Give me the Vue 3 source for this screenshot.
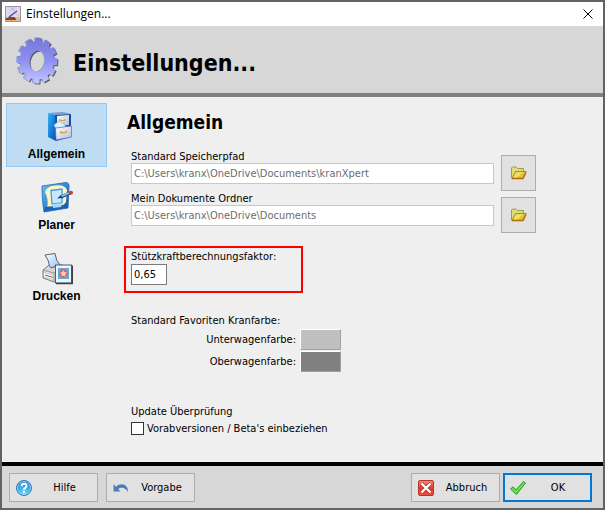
<script setup>
import { ref } from 'vue'

const sections = [
  { id: 'general', label: 'Allgemein' },
  { id: 'planner', label: 'Planer' },
  { id: 'print', label: 'Drucken' },
]
const active = ref('general')

const folders = ref([
  { id: 'storage', label: 'Standard Speicherpfad', path: 'C:\\Users\\kranx\\OneDrive\\Documents\\kranXpert' },
  { id: 'documents', label: 'Mein Dokumente Ordner', path: 'C:\\Users\\kranx\\OneDrive\\Documents' },
])
const factor = ref('0,65')
const preRelease = ref(false)

// Outline of the twelve-toothed gear in the header
function gearOutline(cx, cy, rx, ry, teeth) {
  const points = []
  for (let i = 0; i < teeth; i++) {
    const mid = ((i + 0.1) / teeth) * Math.PI * 2
    for (const [offset, scale] of [[-0.18, 0.83], [-0.15, 1], [0.15, 1], [0.18, 0.83]]) {
      const a = mid + offset
      points.push(`${(cx + Math.cos(a) * rx * scale).toFixed(1)} ${(cy + Math.sin(a) * ry * scale).toFixed(1)}`)
    }
  }
  return `M${points.join('L')}Z`
}
const hole = 'M25.500 15.200A9.200 11.200 12 0 1 21.500 37A9.200 11.200 12 0 1 25.500 15.200Z'
const gear = gearOutline(23.5, 25.5, 20, 23, 12) + hole
</script>

<template>
  <div class="desktop">
    <main class="dialog">
      <header class="titlebar">
        <svg class="app-icon" viewBox="0 0 16 16" aria-hidden="true">
          <rect x=".5" y=".5" width="15" height="15" fill="#dcd9e8" stroke="#9d91a5" />
          <path d="M1 11h14v4H1z" fill="#d9bb83" />
          <path d="M5 1l5 4M10 1L5 5" stroke="#b9b9e2" fill="none" />
          <path d="M4 11l8-6" stroke="#4147b4" stroke-width="1.4" />
          <path d="M1 12h2l1-1h5l2 1v2H1z" fill="#8d3c1c" />
          <path d="M10 12h5" stroke="#e3c08d" />
          <path d="M11 8l3 2" stroke="#f0b8a0" />
        </svg>
        <span class="titlebar-text">Einstellungen...</span>
        <button class="close" type="button" aria-label="Schließen">
          <svg viewBox="0 0 10 10"><path d="M.5.5l9 9M9.5.5l-9 9" stroke="#000" fill="none" /></svg>
        </button>
      </header>

      <div class="banner">
        <svg class="gear" viewBox="0 0 48 50" aria-hidden="true">
          <defs>
            <linearGradient id="gear-fill" x1="0" y1="0" x2="0" y2="1">
              <stop offset="0" stop-color="#7474da" />
              <stop offset=".5" stop-color="#8f8ff3" />
              <stop offset="1" stop-color="#c6c6ff" />
            </linearGradient>
          </defs>
          <path :d="gear" transform="translate(1 1.2)" fill="#5a6068" fill-rule="evenodd" />
          <path :d="gear" transform="translate(-1.4 0)" fill="#8ba3c4" fill-rule="evenodd" />
          <path :d="gear" fill="url(#gear-fill)" fill-rule="evenodd" />
        </svg>
        <h1>Einstellungen...</h1>
      </div>

      <div class="body">
        <nav class="sidebar">
          <button
            v-for="s in sections"
            :key="s.id"
            type="button"
            class="section"
            :class="{ active: active === s.id }"
            @click="active = s.id"
          >
            <svg v-if="s.id === 'general'" class="section-icon" viewBox="0 0 32 32" aria-hidden="true">
              <defs>
                <linearGradient id="cab" x1="0" y1="0" x2="1" y2="1">
                  <stop offset="0" stop-color="#35b4f8" /><stop offset="1" stop-color="#0749b5" />
                </linearGradient>
                <linearGradient id="drawer" x1="0" y1="0" x2="1" y2="1">
                  <stop offset="0" stop-color="#fff" /><stop offset="1" stop-color="#b4bed8" />
                </linearGradient>
              </defs>
              <path d="M7 2L15 4V30L7 26Z" fill="url(#cab)" />
              <path d="M7 2L21 1L30 2.5L15 4Z" fill="#7b9fc7" />
              <path d="M14 4L30 3V26L15 30Z" fill="#174ca5" />
              <path d="M16 5L28 4V14L16 15Z" fill="url(#drawer)" />
              <path d="M19 8v1.500h5V8" fill="none" stroke="#d7a640" stroke-width="1.2" />
              <path d="M13 14L18 10L23 13L25 16L15 18Z" fill="#d9f3ff" stroke="#68b4e7" stroke-width=".7" />
              <path d="M14.500 17L30.500 15V26L15 29Z" fill="url(#drawer)" stroke="#526da5" stroke-width=".7" />
              <path d="M20 20v2l5-.7V19.5" fill="none" stroke="#d99c2c" stroke-width="1.3" />
            </svg>
            <svg v-else-if="s.id === 'planner'" class="section-icon" viewBox="0 0 32 32" aria-hidden="true">
              <defs>
                <linearGradient id="board" x1="0" y1="0" x2="1" y2="1">
                  <stop offset="0" stop-color="#68c4f5" /><stop offset="1" stop-color="#0b48a3" />
                </linearGradient>
              </defs>
              <path d="M1 4L25 .5C27 .5 28 2 28 4L27 26L3 30C2 25 1 14 1 4Z" fill="url(#board)" stroke="#2166b4" stroke-width=".8" />
              <path d="M4 10Q6 4 14 3.500Q24 2.500 26 8L25 20Q22 25 14 26L6 26Q8 18 4 10Z" fill="#fff3bf" />
              <path d="M10 8.5L21 7V21L11 22Z" fill="#c7e7ff" stroke="#3c9ee8" stroke-width="1.3" />
              <path d="M4 25L21 23L26 25L3 29.500Z" fill="#1464c0" />
              <path d="M11 22L21 21L20 25L12 26Z" fill="#a8d8fa" />
              <path d="M20 15L29 11" stroke="#214f92" stroke-width="3.2" />
              <path d="M20 14.6L28 11" stroke="#8fc8f0" stroke-width="1.6" />
              <path d="M16 16.5L20 13L21.5 16Z" fill="#1f3d6c" />
              <circle cx="30" cy="10.8" r="2" fill="#c93c31" />
            </svg>
            <svg v-else class="section-icon" viewBox="0 0 32 32" aria-hidden="true">
              <defs>
                <linearGradient id="sheet" x1="0" y1="0" x2="1" y2="1">
                  <stop offset="0" stop-color="#fff" /><stop offset="1" stop-color="#8fc0fb" />
                </linearGradient>
              </defs>
              <path d="M4 2L14 .5Q15 8 19 12L9 15Q8 7 4 2Z" fill="url(#sheet)" stroke="#4b5260" stroke-width=".9" />
              <path d="M2 17L8 12L10 15L19 12H22V25L13 29L2 25Z" fill="#d6d6d6" stroke="#707070" stroke-width=".9" />
              <path d="M2 17L13 20L21 15M13 20V29" fill="none" stroke="#999" />
              <path d="M3 20L12 23V26L3 23Z" fill="#fff" />
              <path d="M4 22l8 2.5" stroke="#666" />
              <rect x="14.5" y="12" width="16" height="18" fill="#f4f4f4" stroke="#555b63" />
              <path d="M15 30.500h16.300V12.500" fill="none" stroke="#3d4248" stroke-width="1.400" />
              <rect x="17" y="15" width="11" height="11" fill="#53adf2" />
              <circle cx="22.500" cy="20.500" r="4" fill="#e8603c" />
              <path d="M22.500 17.2l1.2 2 2.3.3-1.8 1.7.3 2.4-2-1.1-2 1.1.3-2.4-1.8-1.7 2.3-.3z" fill="#ffd3c4" />
            </svg>
            <span>{{ s.label }}</span>
          </button>
        </nav>

        <section class="panel">
          <h2>Allgemein</h2>

          <div class="folders">
            <div v-for="f in folders" :key="f.id" class="folder-row">
              <div class="field">
                <label :for="f.id" class="caption">{{ f.label }}</label>
                <input :id="f.id" v-model="f.path" class="path" type="text" readonly />
              </div>
              <button class="browse" type="button" :aria-label="f.label + ' auswählen'">
                <svg viewBox="0 0 16 16" aria-hidden="true">
                  <path d="M.5 13V3L1.500 2H5L6.500 3.500H12.500V7L2 13Z" fill="#dfdc78" stroke="#a39a55" />
                  <path d="M4.500 6.500H15.200L12 13.500H1Z" fill="#dfc22f" stroke="#a18a4c" />
                  <path d="M5 7.200H12L6 12.800H2.200Z" fill="#ece365" />
                  <path d="M1 13.500H12L15 7.500" fill="none" stroke="#b06c08" stroke-width="1.300" />
                </svg>
              </button>
            </div>
          </div>

          <div class="highlight field">
            <label for="factor" class="caption">Stützkraftberechnungsfaktor:</label>
            <input id="factor" v-model="factor" class="factor" type="text" />
          </div>

          <div class="colors">
            <p class="caption">Standard Favoriten Kranfarbe:</p>
            <div class="color-rows">
              <div class="color-row">
                <label for="under">Unterwagenfarbe:</label>
                <button id="under" type="button" class="swatch light"></button>
              </div>
              <div class="color-row">
                <label for="upper">Oberwagenfarbe:</label>
                <button id="upper" type="button" class="swatch dark"></button>
              </div>
            </div>
          </div>

          <div class="updates">
            <p class="caption">Update Überprüfung</p>
            <label class="check">
              <input v-model="preRelease" type="checkbox" />
              <span class="caption">Vorabversionen / Beta's einbeziehen</span>
            </label>
          </div>
        </section>
      </div>

      <footer class="actions">
        <div class="group left">
          <button type="button" class="action">
            <svg viewBox="0 0 16 16" aria-hidden="true">
              <defs>
                <radialGradient id="help" cx=".5" cy=".8" r=".8">
                  <stop offset="0" stop-color="#6fd8ff" /><stop offset="1" stop-color="#1678c8" />
                </radialGradient>
              </defs>
              <circle cx="8" cy="8" r="7.500" fill="url(#help)" stroke="#2a7fc0" />
              <circle cx="8" cy="8" r="6.500" fill="none" stroke="#9fdcfb" stroke-width=".8" />
              <path d="M5.500 6.200C5.500 2.800 10.700 3 10.500 6C10.400 7.800 8 7.800 8 9.800" fill="none" stroke="#fff" stroke-width="1.900" />
              <circle cx="8" cy="12" r="1.200" fill="#fff" />
            </svg>
            <span>Hilfe</span>
          </button>
          <button type="button" class="action">
            <svg viewBox="0 0 16 16" aria-hidden="true">
              <path d="M.5 4V11.500H7.500L5.300 9.300C8 6.800 12.300 7.500 14.800 12C15.800 5 8.500 1.500 3 6.700Z" fill="#4c7dbb" />
            </svg>
            <span>Vorgabe</span>
          </button>
        </div>
        <div class="group right">
          <button type="button" class="action">
            <svg viewBox="0 0 16 16" aria-hidden="true">
              <defs>
                <linearGradient id="cancel" x1="0" y1="0" x2="0" y2="1">
                  <stop offset="0" stop-color="#f48a80" /><stop offset=".5" stop-color="#dd3b31" /><stop offset="1" stop-color="#f0503a" />
                </linearGradient>
              </defs>
              <rect x=".5" y=".5" width="15" height="15" rx="1.500" fill="url(#cancel)" stroke="#b8352d" />
              <path d="M3.500 3.500l9 9M12.500 3.500l-9 9" stroke="#a83028" stroke-width="3.600" />
              <path d="M3.500 3.500l9 9M12.500 3.500l-9 9" stroke="#fff" stroke-width="2.400" />
            </svg>
            <span>Abbruch</span>
          </button>
          <button type="button" class="action primary">
            <svg viewBox="0 0 16 16" aria-hidden="true">
              <path d="M.6 9L3 6.800L6 9.800L13.500 1.500L15.500 3L6.500 14.500Z" fill="#4ed13c" stroke="#239a1f" stroke-width=".9" />
              <path d="M2 8.800L6.200 12L14 3" fill="none" stroke="#96ee7d" stroke-width=".9" />
            </svg>
            <span>OK</span>
          </button>
        </div>
      </footer>
    </main>
  </div>
</template>

<style>
body {
  background: #646464;
}
</style>

<style scoped>
* {
  box-sizing: border-box;
}

.desktop {
  display: flex;
  min-height: 100vh;
  padding: 2px;
  background: #626262;
  color: #000;
  font: 11px/14px "DejaVu Sans Condensed", "DejaVu Sans", sans-serif;
}

button,
input {
  margin: 0;
  padding: 0;
  font: inherit;
  color: inherit;
  border-radius: 0;
}

svg {
  display: block;
  flex: none;
}

h1,
h2,
p {
  margin: 0;
}

.caption {
  padding-top: 2px;
  line-height: 12px;
}

.dialog {
  display: flex;
  flex: 1;
  flex-direction: column;
  min-width: 0;
  background: #efefef;
}

.titlebar {
  display: flex;
  align-items: center;
  height: 24px;
  padding: 0 10px 0 3px;
  background: #fff;
  font: 12px/16px "Open Sans", "Noto Sans", sans-serif;
}

.app-icon {
  width: 16px;
  height: 16px;
  margin-right: 5px;
}

.titlebar-text {
  flex: 1;
}

.close {
  border: 0;
  background: none;
}

.close svg {
  width: 10px;
  height: 10px;
}

.banner {
  display: flex;
  align-items: center;
  gap: 11px;
  height: 71px;
  padding-left: 12px;
  border-bottom: 4px solid #808080;
  background: #d7d7d7;
}

.gear {
  width: 48px;
  height: 50px;
}

h1 {
  padding-top: 6px;
  font-size: 23px;
  line-height: 28px;
}

h2 {
  margin-left: -4px;
  font-size: 19px;
  line-height: 28px;
}

.body {
  display: flex;
  flex: 1;
}

.sidebar {
  display: flex;
  flex: none;
  flex-direction: column;
  gap: 7px;
  width: 109px;
  padding: 6px 4px;
}

.section {
  display: flex;
  flex-direction: column;
  align-items: center;
  gap: 4px;
  height: 64px;
  padding-top: 7px;
  border: 1px solid transparent;
  background: none;
  font: bold 12px/14px "Liberation Sans", sans-serif;
}

.section.active {
  border-color: #90c8f6;
  background: #c0dcf3;
}

.section-icon {
  width: 32px;
  height: 32px;
}

.panel {
  flex: 1;
  min-width: 0;
  padding: 11px 67px 12px 20px;
}

.folders {
  margin-top: 13px;
}

.folder-row {
  display: flex;
  align-items: flex-end;
  gap: 7px;
  height: 42px;
}

.field {
  display: flex;
  flex-direction: column;
  align-items: flex-start;
}

.folder-row .field {
  flex: 1;
  height: 42px;
}

.path {
  width: 100%;
  height: 21px;
  padding: 0 2px;
  border: 1px solid #c8c8c8;
  background: #fff;
  color: #6d6d6d;
}

.browse {
  display: flex;
  align-items: center;
  justify-content: center;
  width: 35px;
  height: 36px;
  border: 1px solid #adadad;
  background: #e1e1e1;
}

.browse svg {
  width: 16px;
  height: 16px;
}

.highlight {
  gap: 1px;
  width: 179px;
  margin: 13px 0 0 -7px;
  padding: 1px 5px 6px;
  border: 2px solid #f00;
}

.factor {
  width: 36px;
  height: 21px;
  padding: 0 2px;
  border: 1px solid #7a7a7a;
  background: #fff;
}

.colors {
  width: 210px;
  margin-top: 20px;
}

.color-rows {
  display: grid;
  gap: 1px;
  margin-top: 2px;
}

.color-row {
  display: flex;
  align-items: center;
  justify-content: flex-end;
  gap: 4px;
}

.swatch {
  width: 41px;
  height: 21px;
  border: 1px solid;
  border-color: #fff #a0a0a0 #a0a0a0 #fff;
}

.light {
  background: #c0c0c0;
}

.dark {
  background: #808080;
}

.updates {
  display: flex;
  flex-direction: column;
  gap: 3px;
  margin-top: 32px;
}

.check {
  display: flex;
  align-items: center;
  gap: 3px;
}

.check input {
  appearance: none;
  width: 13px;
  height: 13px;
  border: 1px solid #333;
  background: #fff;
}

.check input:checked {
  background: #333;
  box-shadow: inset 0 0 0 2px #fff;
}

.actions {
  display: flex;
  justify-content: space-between;
  padding: 7px 11px 6px 7px;
  border-top: 4px solid #000;
  background: #d7d7d7;
}

.group {
  display: flex;
}

.left {
  gap: 8px;
}

.right {
  gap: 3px;
}

.action {
  display: flex;
  align-items: center;
  width: 89px;
  height: 29px;
  padding-left: 6px;
  border: 1px solid #adadad;
  background: #e1e1e1;
}

.action svg {
  width: 16px;
  height: 16px;
}

.action span {
  flex: 1;
  text-align: center;
}

.primary {
  padding-left: 5px;
  border: 2px solid #0078d7;
}
</style>
